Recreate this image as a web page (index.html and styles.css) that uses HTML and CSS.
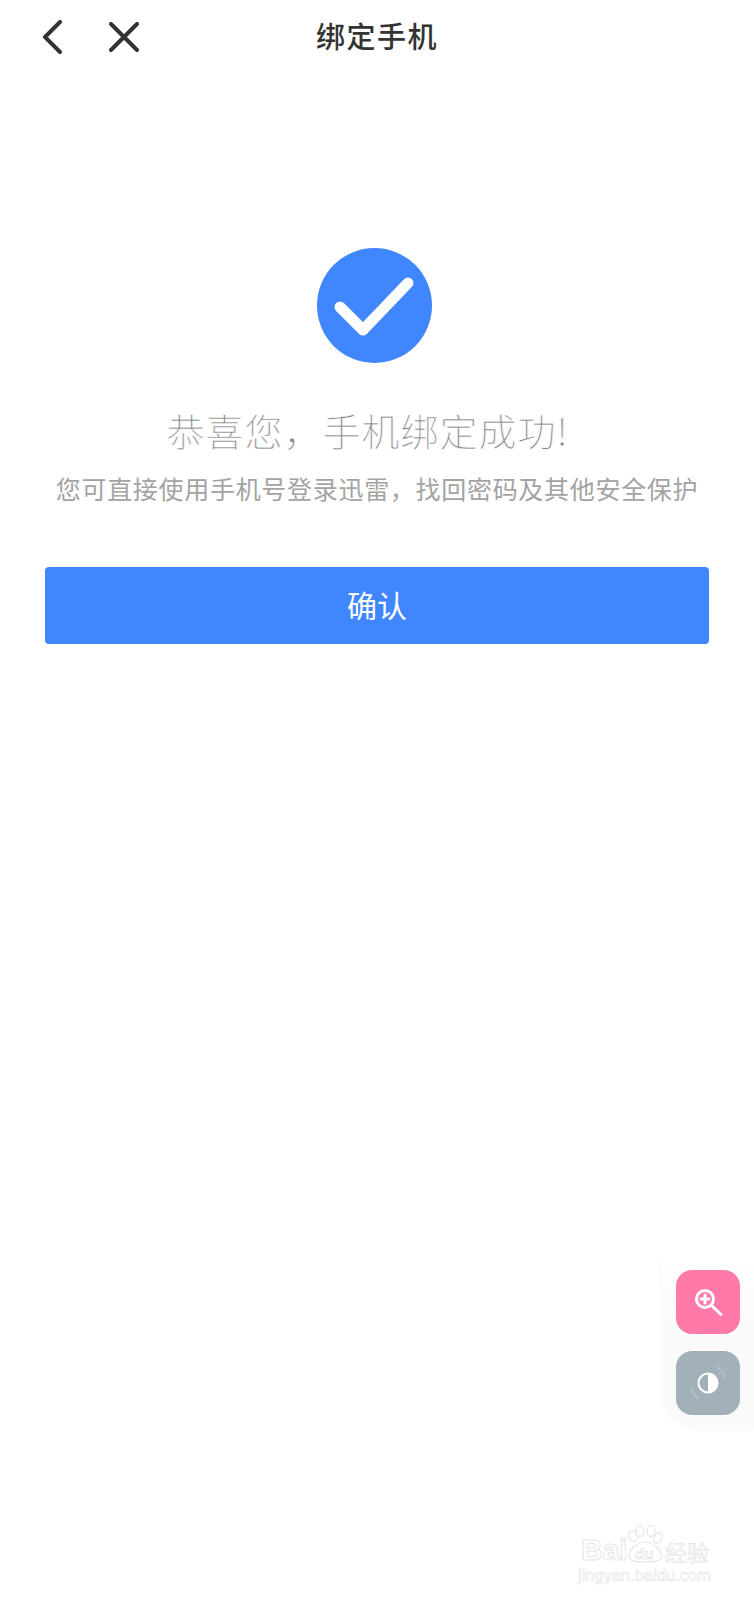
FILE: index.html
```html
<!DOCTYPE html>
<html lang="zh-CN">
<head>
    <meta charset="UTF-8">
    <meta name="viewport" content="width=device-width, initial-scale=1.0">
    <title>绑定手机</title>
    <link rel="stylesheet" href="styles.css">
</head>
<body>
    <header class="topbar">
        <div class="topbar-icons">
            <svg class="icon-back" width="20" height="34" viewBox="0 0 20 34"><polyline points="18,2 3,17 18,32"/></svg>
            <svg class="icon-close" width="30" height="30" viewBox="0 0 30 30"><path d="M2 2L28 28M28 2L2 28"/></svg>
        </div>
        <h1 class="title">绑定手机</h1>
        <div></div>
    </header>

    <main class="result">
        <svg class="result-icon" width="115" height="115" viewBox="0 0 115 115">
            <circle cx="57.5" cy="57.5" r="57.5" fill="#3f86ff"/>
            <polyline points="23,59 46,82 91,35"/>
        </svg>
        <h2 class="result-title">恭喜您，手机绑定成功!</h2>
        <p class="result-desc">您可直接使用手机号登录迅雷，找回密码及其他安全保护</p>
        <button class="confirm-btn">确认</button>
    </main>

    <aside class="tools">
        <div class="tool tool-zoom">
            <svg width="30" height="30" viewBox="0 0 30 30">
                <circle cx="12" cy="12" r="8.5"/>
                <path d="M18.5 18.5L28 27.5"/>
                <path d="M8 12H16M12 8V16"/>
            </svg>
        </div>
        <div class="tool tool-contrast">
            <svg width="44" height="44" viewBox="0 0 44 44">
                <path class="ring" d="M31 6A18 18 0 0 1 39 17M13 38A18 18 0 0 1 5 27"/>
                <circle cx="22" cy="22" r="9.5"/>
                <path class="half" d="M22 12.5A9.5 9.5 0 0 1 22 31.500Z"/>
            </svg>
        </div>
    </aside>

    <div class="watermark">
        <svg class="paw" width="36" height="38" viewBox="0 0 36 38">
            <ellipse cx="5" cy="11" rx="4" ry="5.500" transform="rotate(-25 5 11)"/>
            <ellipse cx="12" cy="6" rx="4" ry="5.500"/>
            <ellipse cx="23" cy="6" rx="4" ry="5.500"/>
            <ellipse cx="30" cy="13" rx="4" ry="5.500" transform="rotate(25 30 13)"/>
            <path d="M17 17C24 17 34 25 34 31C34 36 26 37 17 37C8 37 1 36 1 31C1 25 10 17 17 17Z"/>
        </svg>
        <span class="wm-bai">Bai</span>
        <span class="wm-du">du</span>
        <span class="wm-cn">经验</span>
        <span class="wm-url">jingyan.baidu.com</span>
    </div>
</body>
</html>
```

FILE: styles.css
```css
* {
    box-sizing: border-box;
}

body {
    position: relative;
    height: 1600px;
    margin: 0;
    overflow: hidden;
    background-color: #fff;
    font-family: "Noto Sans CJK SC", "Noto Sans", sans-serif;
}

.topbar {
    display: grid;
    grid-template-columns: 1fr auto 1fr;
    align-items: center;
    height: 74px;
}

.topbar-icons {
    display: flex;
    align-items: center;
    gap: 47px;
    padding-left: 42px;
}

.topbar svg {
    fill: none;
    stroke: #333;
    stroke-width: 4;
    stroke-linecap: round;
    stroke-linejoin: round;
}

.title {
    margin: 0 0 4px;
    font-size: 29px;
    font-weight: 500;
    letter-spacing: 1.5px;
    color: #333;
}

.result {
    display: flex;
    flex-direction: column;
    align-items: center;
    padding: 174px 45px 0;
}

.result-icon {
    margin-right: 6px;
}

.result-icon polyline {
    fill: none;
    stroke: #fff;
    stroke-width: 11;
    stroke-linecap: round;
    stroke-linejoin: round;
}

/* white stroke eats into the glyphs, the reference uses a hairline weight */
.result-title {
    margin: 40px 19px 0 0;
    font-size: 38px;
    font-weight: 300;
    line-height: 54px;
    letter-spacing: 1px;
    color: #888;
    -webkit-text-stroke: 0.6px #fff;
}

.result-desc {
    margin: 13px 0 0;
    font-size: 25px;
    line-height: 36px;
    letter-spacing: 0.7px;
    white-space: nowrap;
    color: #a3a3a3;
}

.confirm-btn {
    width: 100%;
    height: 77px;
    margin-top: 61px;
    padding: 0 0 4px;
    border: none;
    border-radius: 4px;
    background-color: #3f86ff;
    font-family: inherit;
    font-size: 30px;
    color: #fff;
}

.tools {
    position: absolute;
    top: 1256px;
    right: 0;
    display: flex;
    flex-direction: column;
    gap: 17px;
    width: 92px;
    height: 172px;
    padding: 14px 0 0 14px;
    border-radius: 0 0 0 40px;
    background: linear-gradient(to bottom, #fff, #fafafa 40%);
    box-shadow: -1px 2px 4px rgba(0, 0, 0, 0.03);
}

.tool {
    display: flex;
    align-items: center;
    justify-content: center;
    width: 64px;
    height: 64px;
    border-radius: 16px;
}

.tool-zoom {
    background-color: #ff7aa9;
}

.tool-zoom svg {
    fill: none;
    stroke: #fff;
    stroke-width: 3;
    stroke-linecap: round;
}

.tool-contrast {
    background-color: #a2b1b9;
}

.tool-contrast svg {
    fill: none;
    stroke: #fff;
    stroke-width: 2;
}

.tool-contrast .ring {
    stroke: #b7c3c9;
    stroke-width: 1.5;
}

.tool-contrast .half {
    fill: #fff;
    stroke: none;
}

.watermark {
    position: absolute;
    top: 1515px;
    left: 575px;
    width: 145px;
    height: 75px;
    color: #fff;
    -webkit-text-stroke: 1px #e6e6e6;
    font-family: "Liberation Sans", sans-serif;
}

.watermark span {
    position: absolute;
    line-height: 1;
}

.paw {
    position: absolute;
    top: 10px;
    left: 53px;
    fill: #fff;
    stroke: #e6e6e6;
    stroke-width: 1.2;
}

.wm-bai {
    top: 20px;
    left: 6px;
    font-size: 30px;
    font-weight: 700;
}

.wm-du {
    top: 31px;
    left: 60px;
    font-size: 15px;
    font-weight: 700;
    -webkit-text-stroke: 0.6px #dcdcdc;
}

.wm-cn {
    top: 25px;
    left: 90px;
    font-family: "Noto Sans CJK SC", sans-serif;
    font-size: 22px;
    -webkit-text-stroke: 0.6px #e0e0e0;
}

.wm-url {
    top: 52px;
    left: 3px;
    font-size: 16.5px;
    -webkit-text-stroke: 0.6px #e6e6e6;
}
```
